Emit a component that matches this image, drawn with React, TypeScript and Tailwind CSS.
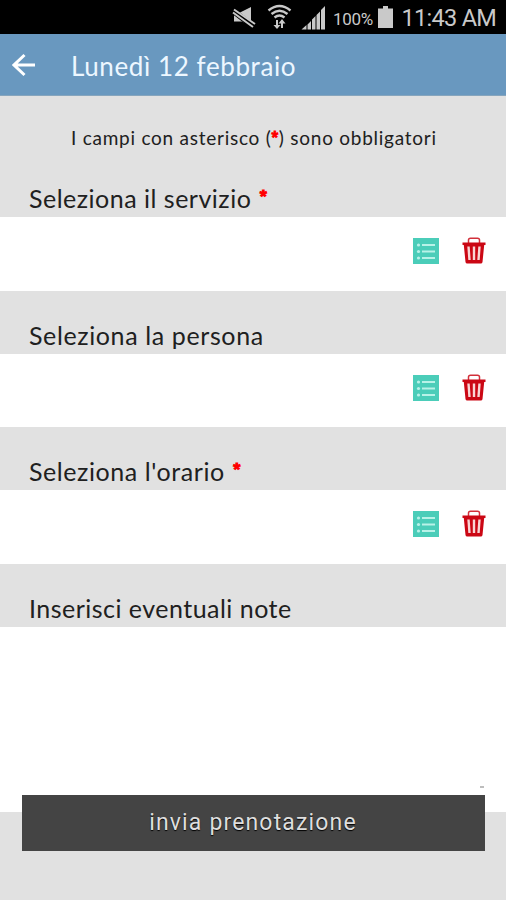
import React from "react";

function StatusBar() {
  return (
    <div className="flex h-[34px] bg-black pl-[232px] text-[#c9c9c9]">
      <svg width="100" height="34" viewBox="0 0 100 34" fill="currentColor" className="shrink-0">
        <path d="M2 12.500h6L19 7v19l-9-4.500H2z" />
        <path d="M0 10l22 17" stroke="#000" strokeWidth="6" fill="none" />
        <path d="M2 9.500l21 14.500M1 12.500l20 14.500" stroke="currentColor" strokeWidth="2" fill="none" />
        <g fill="none" stroke="currentColor" strokeWidth="2.400">
          <path d="M36.500 10.500q11-9 22 0M39.500 14q8-6.500 16 0M42.500 17.500q5-4 10 0" />
          <path d="M45 20v8M50 20v8" strokeWidth="2" />
        </g>
        <path d="M41.500 25h7L45 29zM46.500 23.500h7L50 19z" />
        <path d="M69.500 29.500l5-4.500v4.500zM75.500 24.500l3.500-3.500v8.500h-3.500zM80 19.500l3.500-3.500v13.500H80zM84.500 15l3.500-3.500v18h-3.500zM89 10l4-4v23.500h-4z" />
      </svg>
      <span className="ml-[1px] w-[45px] whitespace-nowrap pt-[6.500px] font-['Roboto',sans-serif] text-[17px] leading-[24px] tracking-[-0.3px]">100%</span>
      <svg width="16" height="34" viewBox="0 0 16 34" fill="currentColor" className="shrink-0">
        <path d="M5 6h5v2.500h5V28H0V8.500h5z" />
      </svg>
      <span className="ml-[7.500px] whitespace-nowrap pt-[4px] font-['Roboto',sans-serif] text-[23.500px] leading-[29px] tracking-[-0.7px]">11:43 AM</span>
    </div>
  );
}

function ListIcon() {
  return (
    <svg width="26" height="26" viewBox="0 0 26 26" className="shrink-0">
      <path d="M0 0h26v26H0z" fill="#4bcdb9" />
      <g fill="#b9f2e8">
        <circle cx="5.500" cy="7" r="1.600" />
        <circle cx="5.500" cy="13.500" r="1.600" />
        <circle cx="5.500" cy="20" r="1.600" />
        <path d="M9 6h13v2H9zM9 12.500h13v2H9zM9 19h13v2H9z" />
      </g>
    </svg>
  );
}

function TrashIcon() {
  return (
    <svg width="24" height="28" viewBox="0 0 24 28" className="shrink-0">
      <path d="M6.500 6V3Q6.500 1.200 8.500 1.200h7Q17.500 1.200 17.500 3V6" fill="none" stroke="#d2303a" strokeWidth="1.500" />
      <path d="M.5 5.500h23v2.500h-1.300l-1.700 17q-.2 1.500-1.700 1.500H5.200q-1.500 0-1.700-1.500L1.800 8H.5z" fill="#cb0714" />
      <path d="M6.500 9.500l1 13.500M12 9.500v13.500M17.500 9.500l-1 13.500" stroke="#f9d5d5" strokeWidth="2.400" fill="none" />
    </svg>
  );
}

function Label({ text, spacing, required }: { text: string; spacing: string; required?: boolean }) {
  return (
    <div className="flex h-[63px] items-end whitespace-nowrap pb-[4px] pl-[29px] font-['Lato',sans-serif] text-[25px] leading-[30px] text-[#202020]">
      <span className={spacing}>{text}</span>
      {required && (
        <span className="mb-[2px] ml-[8.500px] font-['Roboto',sans-serif] text-[15px] font-black leading-[30px] text-[#ff0000] [-webkit-text-stroke:1.200px_#ff0000]">*</span>
      )}
    </div>
  );
}

function PickerField() {
  return (
    <div className="flex h-[73.500px] items-start justify-end gap-[23px] bg-white pr-[20px] pt-[20px]">
      <div className="pt-[1px]"><ListIcon /></div>
      <TrashIcon />
    </div>
  );
}

export default function App() {
  return (
    <div className="flex h-[900px] w-[506px] flex-col overflow-hidden bg-[#e1e1e1]">
      <StatusBar />
      <header className="flex h-[62px] items-center border-b border-[#86a5bd] bg-[#6998bf] pl-[12px] text-white">
        <svg width="23" height="24" viewBox="0 0 23 24" fill="none" stroke="currentColor" strokeWidth="3">
          <path d="M12.500 2L2 12l10.500 10M2 12h21" />
        </svg>
        <h1 className="ml-[36px] whitespace-nowrap pt-[2px] font-['Lato',sans-serif] text-[26px] leading-[32px] tracking-[0.6px] text-[#edf7ff]">Lunedì 12 febbraio</h1>
      </header>
      <p className="h-[58px] whitespace-nowrap pl-[71px] pt-[29px] font-['Lato',sans-serif] text-[19px] leading-[26px] tracking-[0.75px] text-[#202020]">
        I campi con asterisco (<span className="relative -top-[3px] font-['Roboto',sans-serif] text-[14px] font-black text-[#ff0000] [-webkit-text-stroke:1px_#ff0000]">*</span>) sono obbligatori
      </p>
      <Label text="Seleziona il servizio" spacing="tracking-[0.500px]" required />
      <PickerField />
      <Label text="Seleziona la persona" spacing="tracking-[0.620px]" />
      <PickerField />
      <Label text="Seleziona l'orario" spacing="tracking-[0.580px]" required />
      <PickerField />
      <Label text="Inserisci eventuali note" spacing="tracking-[0.480px]" />
      <div className="flex h-[185px] shrink-0 items-end justify-end bg-white pb-[24px] pr-[22px]">
        <span className="h-[2px] w-[4px] bg-[#bdbdbd]" />
      </div>
      <button className="mx-[21.500px] -mt-[16.500px] flex h-[56px] shrink-0 items-center justify-center bg-[#444444] pt-[1px] font-['Roboto',sans-serif] text-[23px] tracking-[1.150px] text-[#dedede] [text-shadow:0_1px_1px_#000]">
        invia prenotazione
      </button>
    </div>
  );
}
